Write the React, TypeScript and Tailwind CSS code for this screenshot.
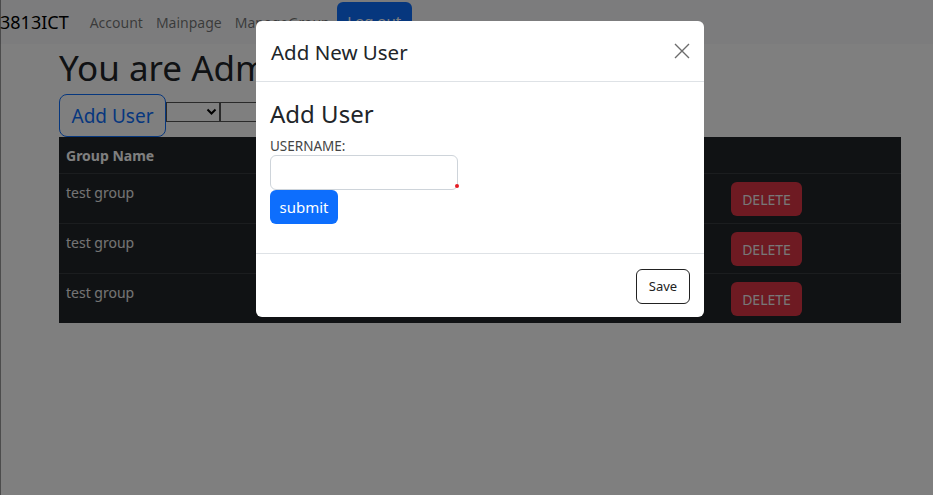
import React from "react";

const font = { fontFamily: '"Noto Sans", "Noto Sans CJK KR", sans-serif' };

function Row() {
  return (
    <div className="flex h-[50px] border-t border-[#373b3e]">
      <div className="w-[672px] px-[7px] pt-[8px] text-[14px] text-[#e9e9e9]">test group</div>
      <div className="pt-[8px]">
        <button className="h-[34px] w-[71px] rounded-md bg-[#dc3545] text-[14px] text-[#f0f0f0]">
          DELETE
        </button>
      </div>
    </div>
  );
}

export default function App() {
  return (
    <div className="relative min-h-[495px] bg-white text-[#212529]" style={font}>
      <nav className="flex h-[44px] items-center bg-[#f8f9fa]">
        <span className="mr-[21px] text-[18px] leading-none text-[#000]">3813ICT</span>
        <div className="flex items-center gap-[13px] text-[14px] text-black/55">
          <span>Account</span>
          <span>Mainpage</span>
          <span>ManageGroup</span>
        </div>
        <button className="ml-[7px] mt-[2px] h-[40px] w-[75px] self-start rounded-md bg-[#0d6efd] pb-[2px] text-[15px] text-white">
          Log out
        </button>
      </nav>

      <main className="pl-[59px] pr-[32px]">
        <h1 className="mt-[1px] h-[49px] text-[35px] leading-[46px]">You are Admin</h1>
        <div className="flex items-start">
          <button className="h-[43px] w-[107px] rounded-lg border border-[#0d6efd] pt-[2px] text-[19px] text-[#0d6efd]">
            Add User
          </button>
          <div className="mt-[8px] flex h-[20px] w-[54px] items-center justify-end border border-[#555] pr-[2px]">
            <svg width="11" height="8" viewBox="0 0 11 8">
              <path d="M1.5 1.5 L5.5 5.5 L9.5 1.5" fill="none" stroke="#000" strokeWidth="2" />
            </svg>
          </div>
          <div className="mt-[8px] h-[20px] w-[150px] border border-[#555]" />
        </div>
        <div className="bg-[#212529]">
          <div className="flex h-[36px] items-center px-[7px] text-[14px] font-bold text-white">
            Group Name
          </div>
          <Row />
          <Row />
          <Row />
        </div>
      </main>

      <div className="absolute left-0 top-0 h-full w-[1px] bg-[#000]/40" />

      <div className="fixed inset-0 bg-black/50" />

      <div className="fixed left-[256px] top-[21px] w-[448px] rounded-md bg-white">
        <div className="flex h-[61px] items-center justify-between border-b border-[#dee2e6] pl-[15px] pr-[14px]">
          <h5 className="pt-[3px] text-[20.5px] text-[#212529]">Add New User</h5>
          <svg width="16" height="16" viewBox="0 0 16 16">
            <path d="M1 1 L15 15 M15 1 L1 15" stroke="#6c6c6c" strokeWidth="1.4" />
          </svg>
        </div>
        <div className="h-[171px] px-[14px] pt-[17px]">
          <h3 className="text-[24px] leading-[30px]">Add User</h3>
          <div className="mt-[9px] text-[13.5px] leading-[16px] text-[#444]">USERNAME:</div>
          <div className="relative mt-[1px] h-[35px] w-[188px] rounded-md border border-[#ced4da]">
            <span className="absolute -right-[2px] bottom-[1px] h-[4px] w-[4px] rounded-full bg-[#e51c23]" />
          </div>
          <button className="h-[34px] w-[68px] rounded-md bg-[#0d6efd] text-[15px] text-white">
            submit
          </button>
        </div>
        <div className="flex h-[64px] items-center justify-end border-t border-[#dee2e6] pr-[14px]">
          <button className="mt-[2px] h-[35px] w-[54px] rounded-md border border-[#222] text-[13px] text-[#222]">
            Save
          </button>
        </div>
      </div>
    </div>
  );
}
